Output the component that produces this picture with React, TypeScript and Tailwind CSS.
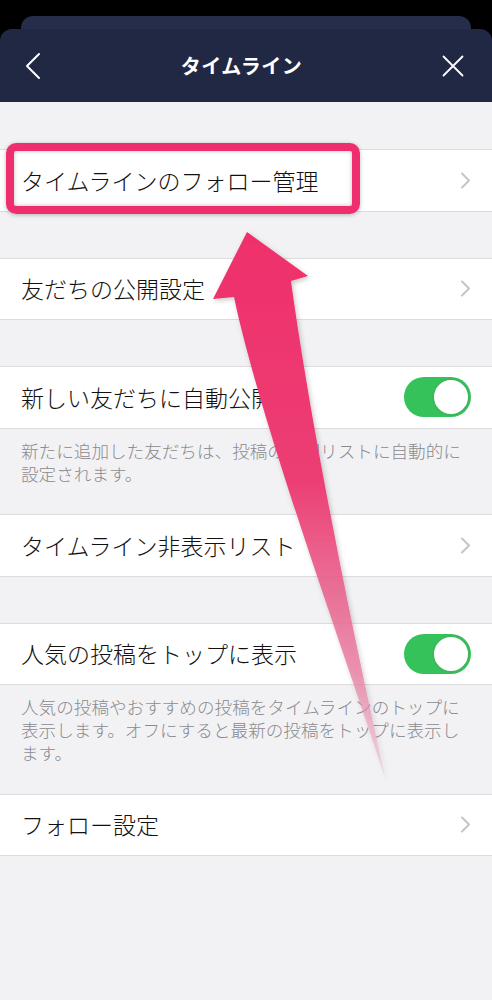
import React from 'react';

type Item =
  | { kind: 'link'; label: string }
  | { kind: 'toggle'; label: string; note: string };

const groups: Item[] = [
  { kind: 'link', label: 'タイムラインのフォロー管理' },
  { kind: 'link', label: '友だちの公開設定' },
  {
    kind: 'toggle',
    label: '新しい友だちに自動公開',
    note: '新たに追加した友だちは、投稿の公開リストに自動的に設定されます。',
  },
  { kind: 'link', label: 'タイムライン非表示リスト' },
  {
    kind: 'toggle',
    label: '人気の投稿をトップに表示',
    note: '人気の投稿やおすすめの投稿をタイムラインのトップに表示します。オフにすると最新の投稿をトップに表示します。',
  },
  { kind: 'link', label: 'フォロー設定' },
];

const Chevron = () => (
  <svg width="11" height="17" viewBox="0 0 11 17" fill="none">
    <path d="M2 1.5 L9 8.5 L2 15.5" stroke="#c5c5c9" strokeWidth="2" strokeLinecap="round" strokeLinejoin="round" />
  </svg>
);

const Toggle = () => (
  <div className="w-[67px] h-[40px] rounded-full bg-[#35c25a] flex items-center justify-end pr-[1px]">
    <div className="w-[38px] h-[38px] rounded-full bg-white border-[2px] border-[#3cb85c]" />
  </div>
);

const Row: React.FC<{ label: string; right: React.ReactNode }> = ({ label, right }) => (
  <div className="h-[62.5px] bg-white border-y border-[#dcdcdf] flex items-center justify-between pl-[21px] pr-[21px]">
    <span className="text-[23px] leading-none font-light text-[#111]">{label}</span>
    {right}
  </div>
);

const App: React.FC = () => {
  return (
    <div className="relative min-h-[1000px] bg-[#f2f2f5] font-['Noto_Sans_CJK_JP',sans-serif] overflow-hidden">
      <div className="bg-black pt-[16px]">
        <div className="mx-[21px] h-[13px] rounded-t-[12px] bg-[#262d4a]" />
        <header className="h-[73px] rounded-t-[12px] bg-[#212843] flex items-center justify-between px-[24px]">
          <svg width="18" height="28" viewBox="0 0 18 28" fill="none">
            <path d="M15 2 L3 14 L15 26" stroke="white" strokeWidth="2" strokeLinecap="round" strokeLinejoin="round" />
          </svg>
          <h1 className="text-white text-[20px] font-bold tracking-[0.5px]">タイムライン</h1>
          <svg width="24" height="24" viewBox="0 0 24 24" fill="none" className="mr-[3px]">
            <path d="M2.5 2.5 L21.5 21.5 M21.5 2.5 L2.5 21.5" stroke="white" strokeWidth="1.8" strokeLinecap="round" />
          </svg>
        </header>
      </div>

      <div className="pt-[47px]">
        {groups.map((item, i) => (
          <div key={i}>
            {item.kind === 'link' ? (
              <>
                <Row label={item.label} right={<Chevron />} />
                <div className="h-[46px]" />
              </>
            ) : (
              <>
                <Row label={item.label} right={<Toggle />} />
                <p className="pl-[21px] pr-[21px] pt-[10px] pb-[29.5px] text-[17.6px] leading-[23px] font-light text-[#8a8a8e]">
                  {item.note}
                </p>
              </>
            )}
          </div>
        ))}
      </div>

      {/* highlight box over the first row */}
      <div className="absolute left-[6px] top-[143px] w-[354px] h-[71px] rounded-[10px] border-[8px] border-[#ef2f6d] shadow-[0_1px_4px_rgba(0,0,0,0.25),inset_0_0_4px_rgba(0,0,0,0.25)]" />

      {/* arrow annotation */}
      <svg className="absolute left-0 top-0 pointer-events-none" width="492" height="1000" viewBox="0 0 492 1000">
        <defs>
          <linearGradient id="arrowFill" gradientUnits="userSpaceOnUse" x1="0" y1="232" x2="0" y2="785">
            <stop offset="0" stopColor="#ef2f6b" />
            <stop offset="0.45" stopColor="#ec3e74" />
            <stop offset="0.8" stopColor="#e97fa2" stopOpacity="0.8" />
            <stop offset="1" stopColor="#eeb2c6" stopOpacity="0.35" />
          </linearGradient>
          <filter id="arrowShadow" x="-20%" y="-10%" width="140%" height="130%">
            <feDropShadow dx="1.5" dy="2" stdDeviation="2.5" floodColor="#000" floodOpacity="0.22" />
          </filter>
        </defs>
        <path
          d="M247 232 L308 276 L291 281 C310 420 350 620 386 781 C340 640 260 420 234 297 L213 299 Z"
          fill="url(#arrowFill)"
          filter="url(#arrowShadow)"
        />
      </svg>
    </div>
  );
};

export default App;
